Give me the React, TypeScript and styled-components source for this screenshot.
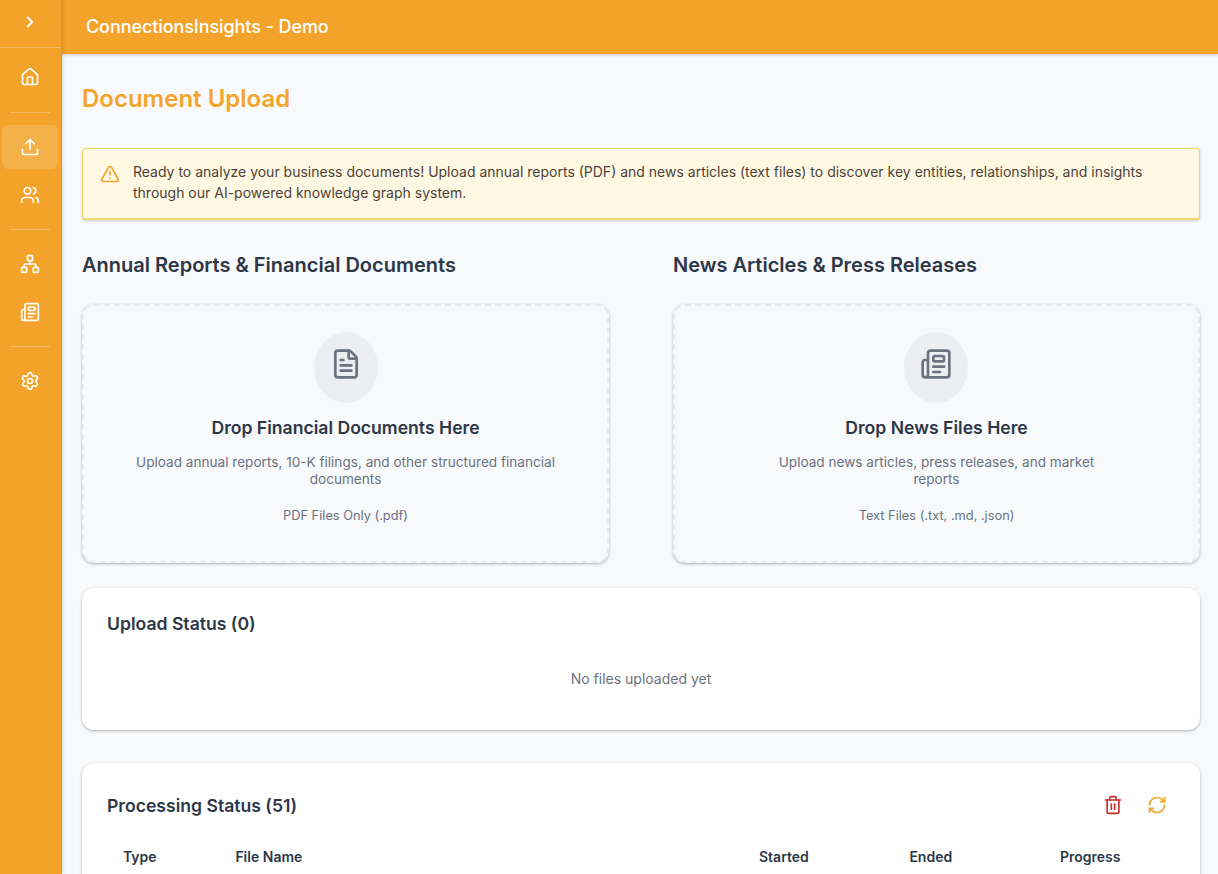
import React from "react";
import styled, { createGlobalStyle } from "styled-components";
import { ChevronRight, House, Upload, Users, Network, Newspaper, Settings, FileText, RefreshCw, Trash2, TriangleAlert } from "lucide-react";

const Global = createGlobalStyle`
  html, body { margin: 0; padding: 0; height: 100%; overflow: hidden; }
  body { font-family: Inter, "Liberation Sans", sans-serif; background: #f8f9fb; }
  #root { height: 100%; }
`;

const Shell = styled.div`
  display: flex;
  height: 874px;
  overflow: hidden;
`;

const Sidebar = styled.nav`
  width: 62px;
  box-sizing: border-box;
  flex: none;
  background: #f3a32a;
  border-right: 1px solid #e1982a;
  box-shadow: 1px 0 3px rgba(0, 0, 0, 0.12);
  display: flex;
  flex-direction: column;
  z-index: 3;
`;

const Toggle = styled.div`
  height: 48px;
  display: flex;
  align-items: center;
  justify-content: center;
  color: #fff;
  border-bottom: 1px solid rgba(255, 255, 255, 0.25);
  margin-bottom: 7px;
  padding: 0 1px 3px 0;
  box-sizing: border-box;
`;

const NavGroup = styled.div<{ $trail?: number }>`
  display: flex;
  flex-direction: column;
  gap: 4px;
  padding: 0 3px 0 2px;
  margin-bottom: ${(p) => p.$trail ?? 0}px;
`;

const NavItem = styled.div<{ $active?: boolean }>`
  height: 44px;
  border-radius: 6px;
  display: flex;
  align-items: center;
  justify-content: center;
  color: #fff;
  background: ${(p) => (p.$active ? "rgba(255, 255, 255, 0.15)" : "transparent")};
`;

const NavDivider = styled.div`
  height: 1px;
  margin: 12px 11px 12px 10px;
  background: rgba(255, 255, 255, 0.25);
`;

const Main = styled.div`
  flex: 1;
  min-width: 0;
  display: flex;
  flex-direction: column;
`;

const Header = styled.header`
  height: 54px;
  flex: none;
  background: #f3a32a;
  box-shadow: 0 1px 3px rgba(0, 0, 0, 0.2);
  display: flex;
  align-items: center;
  padding: 0 24px 2px;
  box-sizing: border-box;
  color: #fff;
  font-size: 18px;
  font-weight: 500;
  letter-spacing: -0.08px;
  z-index: 2;
`;

const Content = styled.main`
  flex: 1;
  overflow: hidden;
  padding: 28px 18px 0 20px;
`;

const PageTitle = styled.h1`
  margin: 0 0 33px;
  height: 33px;
  line-height: 33px;
  font-size: 24px;
  font-weight: 600;
  color: #f4a52c;
`;

const Notice = styled.div`
  height: 72px;
  box-sizing: border-box;
  display: flex;
  align-items: flex-start;
  gap: 13px;
  padding: 12px 17px;
  background: #fff9e3;
  border: 1px solid #f0d96f;
  border-bottom-width: 2px;
  border-radius: 4px;
  box-shadow: 0 1px 3px rgba(0, 0, 0, 0.18);
  color: #4e4238;
  font-size: 14px;
  line-height: 21px;
  margin-bottom: 28px;
`;

const NoticeIcon = styled.span`
  color: #f4a52c;
  flex: none;
  height: 21px;
  display: flex;
  align-items: center;
  margin-top: 2px;
`;

const Columns = styled.div`
  display: grid;
  grid-template-columns: 527px 527px;
  column-gap: 64px;
  margin-bottom: 25px;
`;

const SectionTitle = styled.h2`
  margin: 0 0 22px;
  height: 34px;
  line-height: 34px;
  font-size: 20px;
  font-weight: 600;
  color: #2d3748;
`;

const Drop = styled.div`
  height: 259px;
  box-sizing: border-box;
  border: 2px dashed #e8eaed;
  border-radius: 12px;
  background: #f8f9fb;
  box-shadow: 0 1px 3px rgba(0, 0, 0, 0.28);
  display: flex;
  flex-direction: column;
  align-items: center;
  padding: 26px 40px 0;
  text-align: center;
`;

const IconCircle = styled.div<{ $nudge: number }>`
  width: 64px;
  height: 71px;
  border-radius: 50%;
  background: #eceef1;
  color: #6b7280;
  display: flex;
  align-items: center;
  justify-content: center;
  padding-bottom: 7px;
  box-sizing: border-box;
  margin: 0 ${(p) => p.$nudge}px 12px 0;
`;

const DropTitle = styled.div`
  font-size: 17.6px;
  font-weight: 600;
  line-height: 26px;
  color: #2d3748;
  margin-bottom: 13px;
`;

const DropText = styled.div<{ $wrap: number }>`
  font-size: 13.6px;
  line-height: 17px;
  color: #6b7280;
  max-width: ${(p) => p.$wrap}px;
  margin-bottom: 20px;
`;

const DropHint = styled.div`
  font-size: 12.8px;
  line-height: 16px;
  color: #6b7280;
`;

const Card = styled.section`
  background: #fff;
  border-radius: 12px;
  box-shadow: 0 1px 3px rgba(0, 0, 0, 0.3);
  padding: 24px 25px;
  box-sizing: border-box;
`;

const StatusCard = styled(Card)`
  height: 142px;
  margin-bottom: 33px;
`;

const ProcessingCard = styled(Card)`
  padding-top: 31px;
`;

const CardRow = styled.div`
  display: flex;
  align-items: center;
  justify-content: space-between;
  height: 24px;
`;

const CardTitle = styled.h3`
  margin: 0;
  font-size: 17.6px;
  font-weight: 600;
  line-height: 24px;
  color: #2d3748;
`;

const Empty = styled.div`
  text-align: center;
  font-size: 14px;
  line-height: 20px;
  color: #6b7280;
  margin-top: 33px;
`;

const Actions = styled.div`
  display: flex;
  gap: 24px;
  margin: 0 8px 2px 0;
`;

const ActionIcon = styled.span<{ $tone: string }>`
  color: ${(p) => p.$tone};
  display: flex;
`;

const TableHead = styled.div`
  display: grid;
  grid-template-columns: 112.4px 523.6px 150.4px 150.6px 1fr;
  margin-top: 29px;
  padding-left: 16px;
  font-size: 14px;
  font-weight: 600;
  line-height: 20px;
  color: #2d3748;
`;

const DropZone = ({ icon, title, text, hint, wrap, nudge }: { icon: React.ReactNode; title: string; text: string; hint: string; wrap: number; nudge: number }) => (
  <Drop>
    <IconCircle $nudge={nudge}>{icon}</IconCircle>
    <DropTitle>{title}</DropTitle>
    <DropText $wrap={wrap}>{text}</DropText>
    <DropHint>{hint}</DropHint>
  </Drop>
);

export default function App() {
  return (
    <Shell>
      <Global />
      <Sidebar>
        <Toggle><ChevronRight size={18} strokeWidth={2.5} /></Toggle>
        <NavGroup $trail={1}><NavItem><House size={20} /></NavItem></NavGroup>
        <NavDivider />
        <NavGroup>
          <NavItem $active><Upload size={20} /></NavItem>
          <NavItem><Users size={20} /></NavItem>
        </NavGroup>
        <NavDivider />
        <NavGroup>
          <NavItem><Network size={20} /></NavItem>
          <NavItem><Newspaper size={20} /></NavItem>
        </NavGroup>
        <NavDivider />
        <NavGroup><NavItem><Settings size={20} /></NavItem></NavGroup>
      </Sidebar>
      <Main>
        <Header>ConnectionsInsights - Demo</Header>
        <Content>
          <PageTitle>Document Upload</PageTitle>
          <Notice>
            <NoticeIcon><TriangleAlert size={20} /></NoticeIcon>
            <div>
              Ready to analyze your business documents! Upload annual reports (PDF) and news articles (text files) to discover key entities, relationships, and insights through our AI-powered knowledge graph system.
            </div>
          </Notice>
          <Columns>
            <div>
              <SectionTitle>Annual Reports &amp; Financial Documents</SectionTitle>
              <DropZone
                icon={<FileText size={32} />}
                title="Drop Financial Documents Here"
                text="Upload annual reports, 10-K filings, and other structured financial documents"
                hint="PDF Files Only (.pdf)"
                wrap={447}
                nudge={0}
              />
            </div>
            <div>
              <SectionTitle>News Articles &amp; Press Releases</SectionTitle>
              <DropZone
                icon={<Newspaper size={32} />}
                title="Drop News Files Here"
                text="Upload news articles, press releases, and market reports"
                hint="Text Files (.txt, .md, .json)"
                wrap={340}
                nudge={1}
              />
            </div>
          </Columns>
          <StatusCard>
            <CardTitle>Upload Status (0)</CardTitle>
            <Empty>No files uploaded yet</Empty>
          </StatusCard>
          <ProcessingCard>
            <CardRow>
              <CardTitle>Processing Status (51)</CardTitle>
              <Actions>
                <ActionIcon $tone="#c53030"><Trash2 size={20} /></ActionIcon>
                <ActionIcon $tone="#f4a52c"><RefreshCw size={20} /></ActionIcon>
              </Actions>
            </CardRow>
            <TableHead>
              <span>Type</span>
              <span>File Name</span>
              <span>Started</span>
              <span>Ended</span>
              <span>Progress</span>
            </TableHead>
          </ProcessingCard>
        </Content>
      </Main>
    </Shell>
  );
}
